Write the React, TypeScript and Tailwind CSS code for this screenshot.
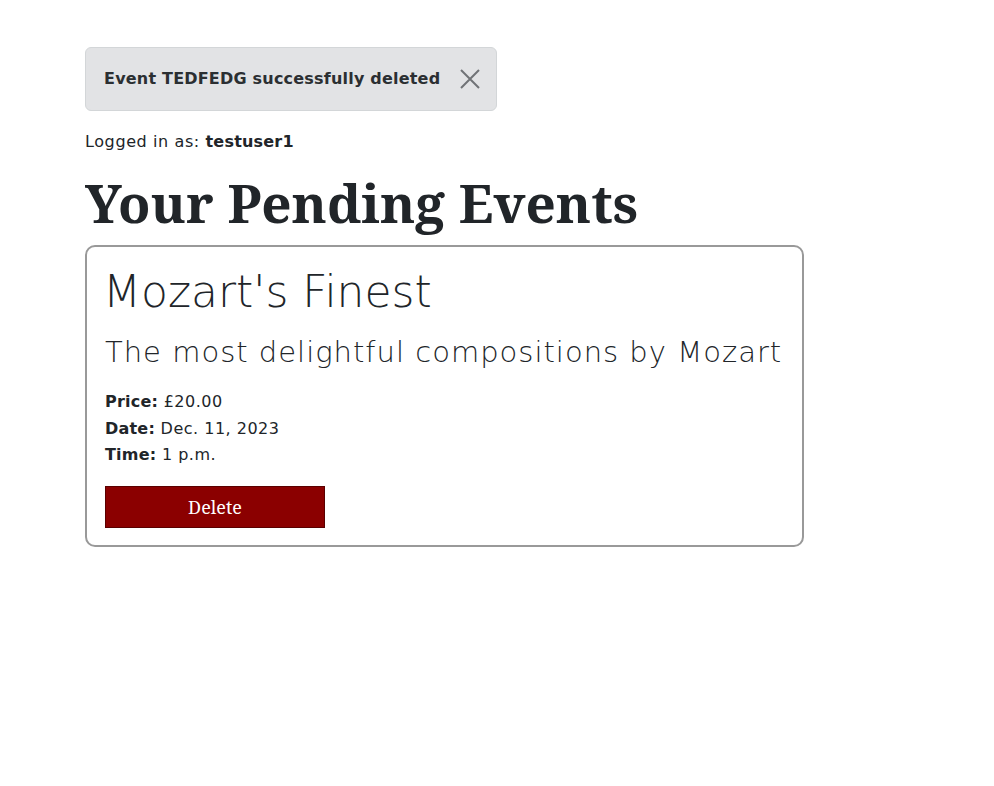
import { useState } from "react";

type PendingEvent = {
  title: string;
  description: string;
  price: string;
  date: string;
  time: string;
};

const events: PendingEvent[] = [
  {
    title: "Mozart's Finest",
    description: "The most delightful compositions by Mozart",
    price: "£20.00",
    date: "Dec. 11, 2023",
    time: "1 p.m.",
  },
];

const sans = "font-['DejaVu_Sans',sans-serif]";
const serif = "font-['Noto_Serif',serif]";

export default function App() {
  const [showAlert, setShowAlert] = useState(true);

  return (
    <div className={`min-h-screen bg-white text-[#212529] ${sans}`}>
      <div className="pl-[85px] pt-[47px]">
        {/* --- Flash message --- */}
        {showAlert && (
          <div className="flex h-[64px] w-[412px] items-center justify-between rounded-md border border-[#d3d6d8] bg-[#e2e3e5] pl-[18px] pr-[16px] text-[#2b2f32]">
            <span className="text-[16px] font-bold tracking-[0.2px]">Event TEDFEDG successfully deleted</span>
            <button onClick={() => setShowAlert(false)} className="text-[#707376]">
              <svg width="20" height="20" viewBox="0 0 20 20" stroke="currentColor" strokeWidth="2">
                <path d="M1 1 L19 19 M19 1 L1 19" />
              </svg>
            </button>
          </div>
        )}

        <p className="mt-[19px] text-[16px] leading-[24px] tracking-[0.6px]">
          Logged in as: <span className="font-bold tracking-[0.2px]">testuser1</span>
        </p>

        <h1 className={`${serif} mt-[19px] text-[53px] font-bold leading-[60px]`}>Your Pending Events</h1>

        {/* --- Event cards --- */}
        {events.map((e, i) => (
          <div key={i} className="mt-[12px] w-[719px] rounded-[10px] border-2 border-[#999] px-[18px] pt-[19px] pb-[17px]">
            <h2 className="-ml-[2px] text-[44px] font-extralight leading-[52px]">{e.title}</h2>
            <h3 className="mt-[14px] whitespace-nowrap text-[29px] font-extralight leading-[40px] tracking-[1px]">
              {e.description}
            </h3>
            <div className="mt-[17px] text-[16px] leading-[26.5px] tracking-[0.5px]">
              <div>
                <span className="font-bold tracking-[0.2px]">Price:</span> {e.price}
              </div>
              <div>
                <span className="font-bold tracking-[0.2px]">Date:</span> {e.date}
              </div>
              <div>
                <span className="font-bold tracking-[0.2px]">Time:</span> {e.time}
              </div>
            </div>
            <button className={`${serif} mt-[17.5px] h-[42px] w-[220px] border border-[#5a0000] bg-[#8b0000] text-[18px] text-white`}>
              Delete
            </button>
          </div>
        ))}
      </div>
    </div>
  );
}
